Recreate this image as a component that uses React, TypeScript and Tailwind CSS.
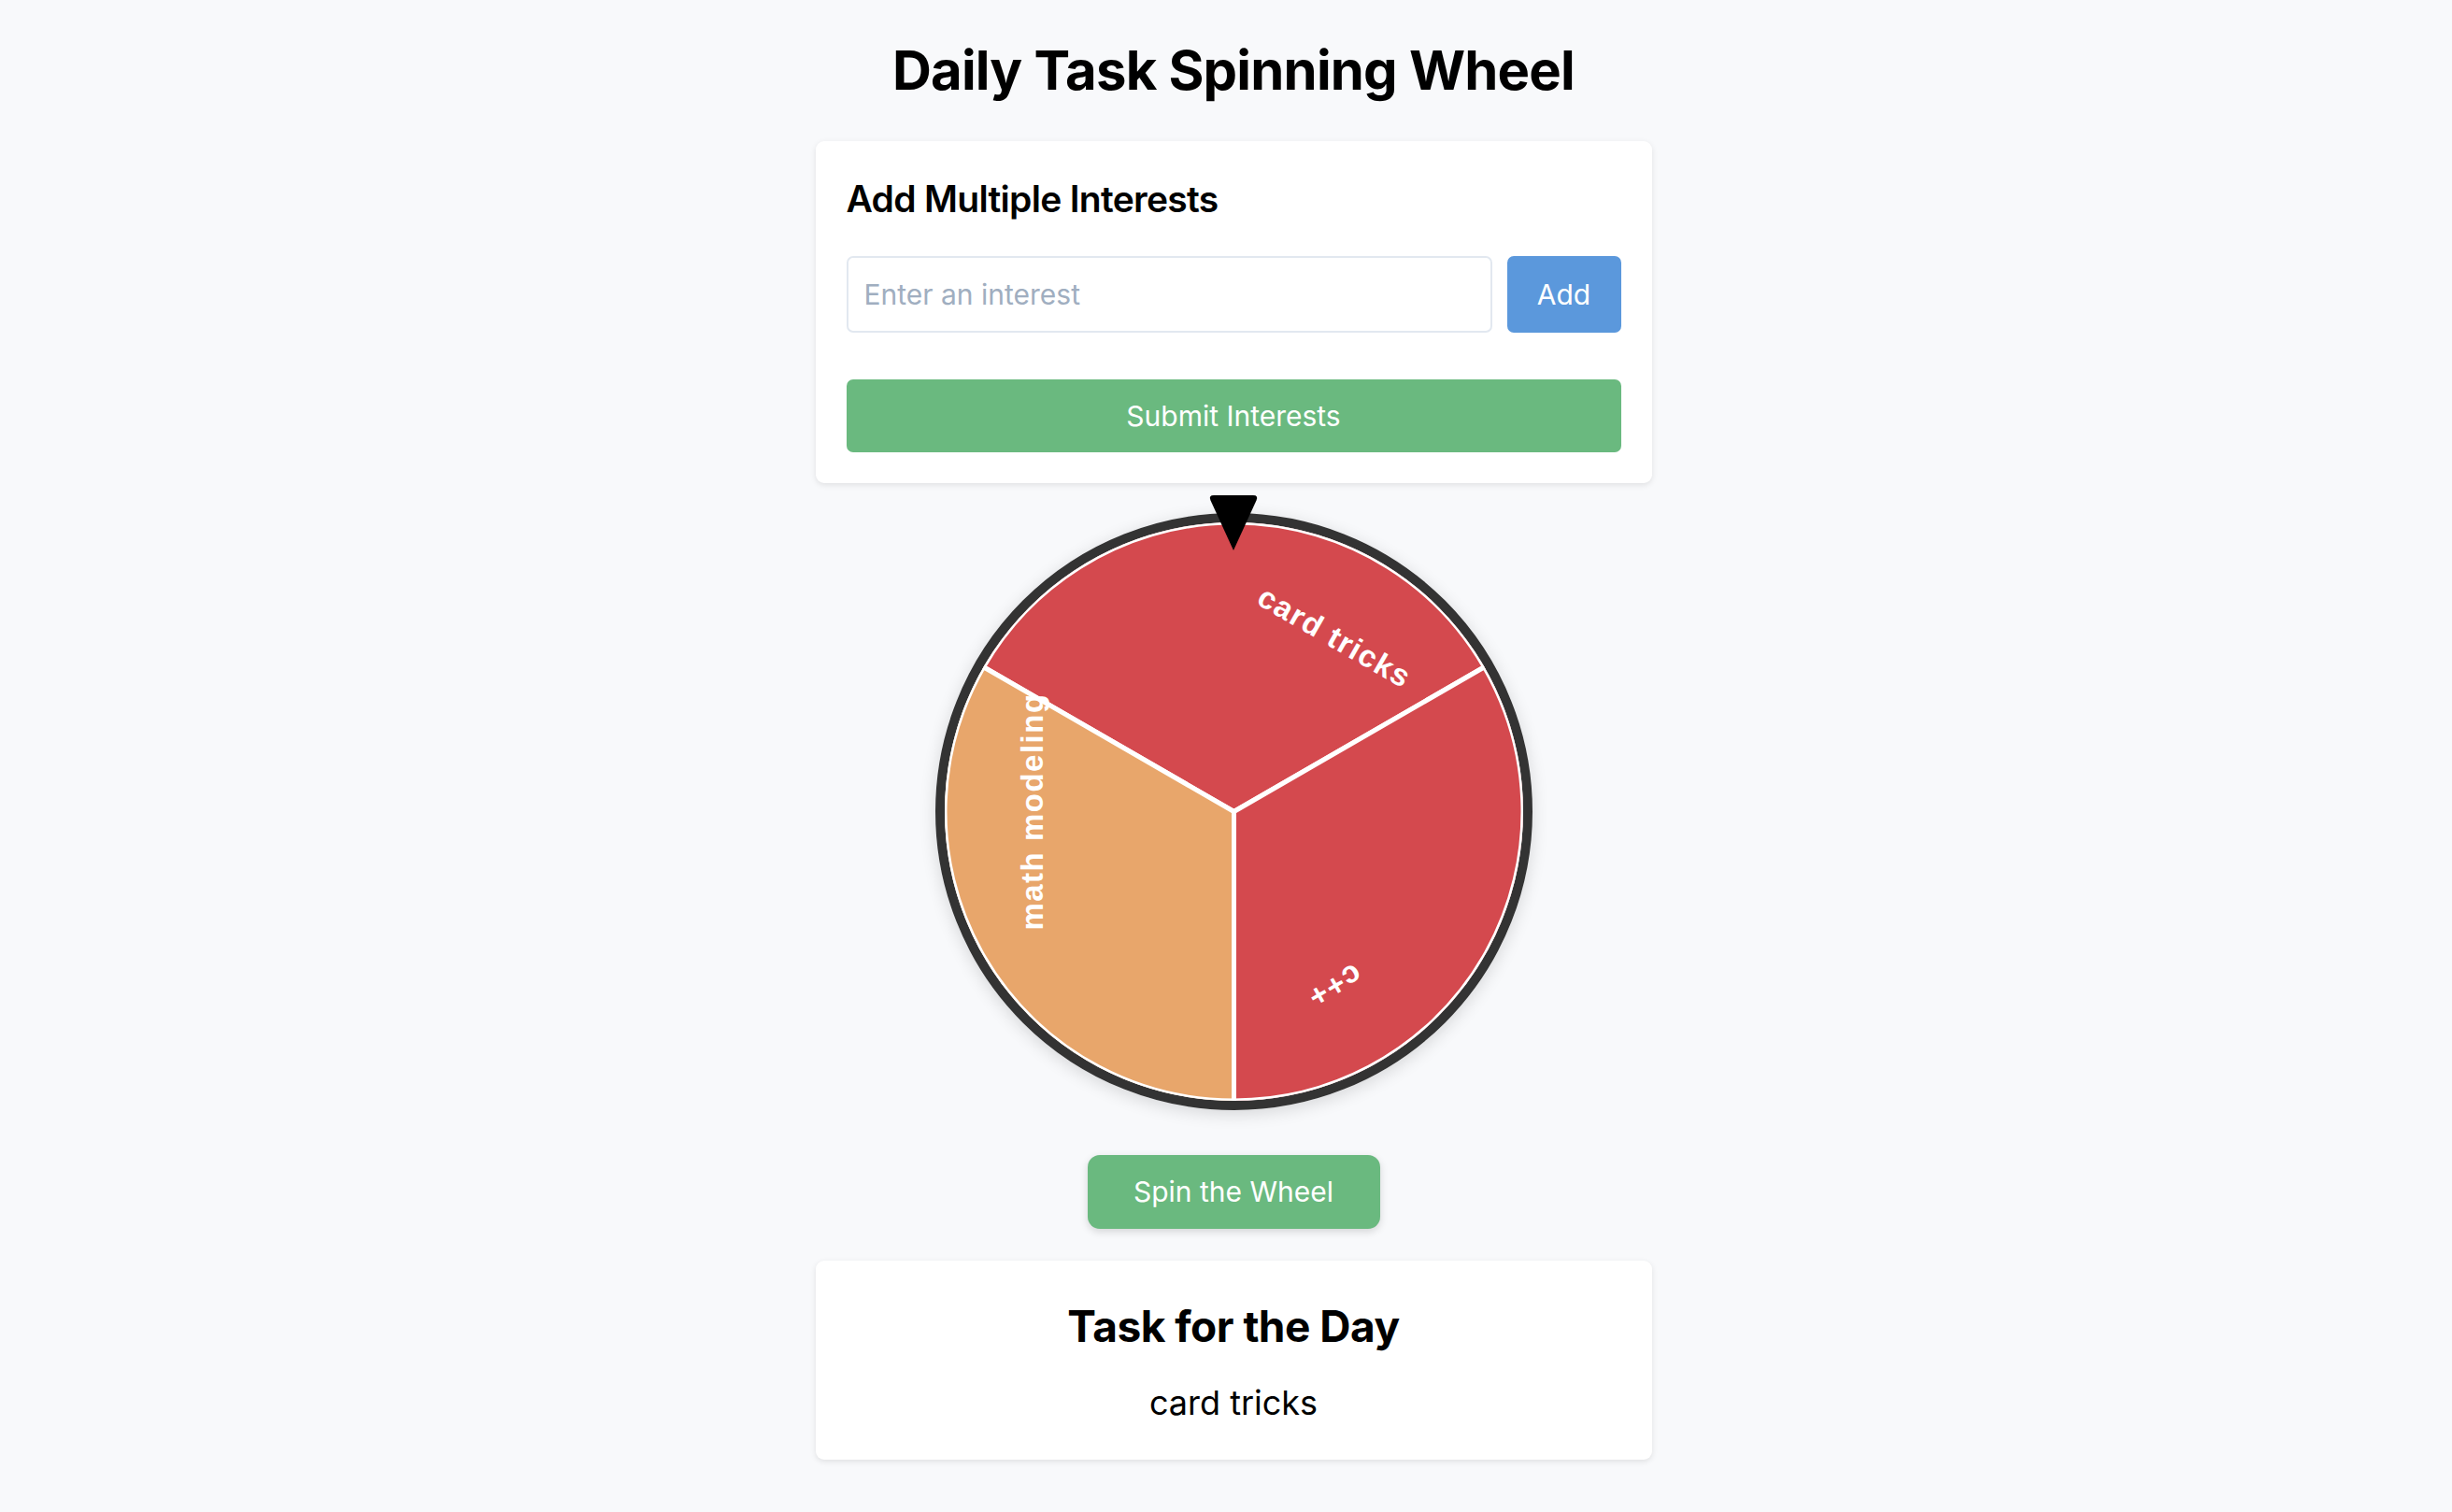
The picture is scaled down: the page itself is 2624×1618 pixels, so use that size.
import React from "react";

const CX = 309.5;
const R = 309.5;

const segments = [
  { from: -60, to: 60, color: "#d4494e", label: "card tricks", at: 30 },
  { from: 60, to: 180, color: "#d4494e", label: "c++", at: 150 },
  { from: 180, to: 300, color: "#e8a66b", label: "math modeling", at: 270 },
];

function point(deg: number, r: number) {
  const a = (deg * Math.PI) / 180;
  return [CX + r * Math.sin(a), CX - r * Math.cos(a)];
}

function slicePath(from: number, to: number) {
  const [x1, y1] = point(from, R);
  const [x2, y2] = point(to, R);
  return `M ${CX} ${CX} L ${x1} ${y1} A ${R} ${R} 0 0 1 ${x2} ${y2} Z`;
}

function Wheel() {
  return (
    <div className="relative mt-[32px]">
      <div className="w-[639px] h-[639px] rounded-full border-[10px] border-[#333333] overflow-hidden shadow-[0_4px_18px_rgba(0,0,0,0.14)]">
        <svg width="619" height="619" viewBox="0 0 619 619">
          {segments.map((s) => (
            <path
              key={s.label}
              d={slicePath(s.from, s.to)}
              fill={s.color}
              stroke="#ffffff"
              strokeWidth="5"
            />
          ))}
          {segments.map((s) => (
            <text
              key={s.label + "-t"}
              x={CX}
              y={CX - 216}
              transform={`rotate(${s.at} ${CX} ${CX})`}
              textAnchor="middle"
              dominantBaseline="central"
              fill="#ffffff"
              fontSize="33"
              fontWeight="700"
              letterSpacing="1.5"
              fontFamily="'Liberation Sans', Arial, sans-serif"
            >
              {s.label}
            </text>
          ))}
        </svg>
      </div>
      <svg
        className="absolute top-[-19px] left-1/2 -translate-x-1/2"
        width="54"
        height="59"
        viewBox="0 0 54 59"
      >
        <path d="M 6 0 L 48 0 Q 54 0 51.5 5.5 L 27 59 L 2.5 5.5 Q 0 0 6 0 Z" fill="#000000" />
      </svg>
    </div>
  );
}

export default function App() {
  return (
    <div className="min-h-screen bg-[#f8f9fb] flex flex-col items-center pt-[39px] pl-[16px] pb-[40px] font-['Inter',sans-serif] text-black">
      <h1 className="text-[58px] leading-[72px] font-bold tracking-[-0.8px]">
        Daily Task Spinning Wheel
      </h1>

      <div className="mt-[40px] w-[895px] bg-white rounded-[9px] p-[33px] shadow-[0_2px_6px_rgba(0,0,0,0.1)]">
        <h2 className="text-[39px] leading-[57px] font-semibold tracking-[-0.7px]">
          Add Multiple Interests
        </h2>
        <div className="mt-[33px] flex gap-[16px]">
          <input
            type="text"
            placeholder="Enter an interest"
            className="flex-1 h-[82px] border-2 border-[#e2e8f0] rounded-[7px] px-[17px] text-[30px] placeholder:text-[#a0aec0] outline-none"
          />
          <button className="w-[122px] h-[82px] rounded-[7px] bg-[#5b98dc] text-white text-[30px]">
            Add
          </button>
        </div>
        <button className="mt-[50px] w-full h-[78px] rounded-[7px] bg-[#6ab97f] text-white text-[30px]">
          Submit Interests
        </button>
      </div>

      <Wheel />

      <button className="mt-[48px] w-[313px] h-[79px] rounded-[13px] bg-[#6ab97f] text-white text-[30px] shadow-[0_3px_8px_rgba(0,0,0,0.15)]">
        Spin the Wheel
      </button>

      <div className="mt-[34px] w-[895px] bg-white rounded-[9px] pt-[34px] pb-[34px] text-center shadow-[0_2px_6px_rgba(0,0,0,0.1)]">
        <h2 className="text-[46px] leading-[72px] font-bold tracking-[-0.5px]">
          Task for the Day
        </h2>
        <p className="mt-[19px] text-[36px] leading-[54px]">card tricks</p>
      </div>
    </div>
  );
}
